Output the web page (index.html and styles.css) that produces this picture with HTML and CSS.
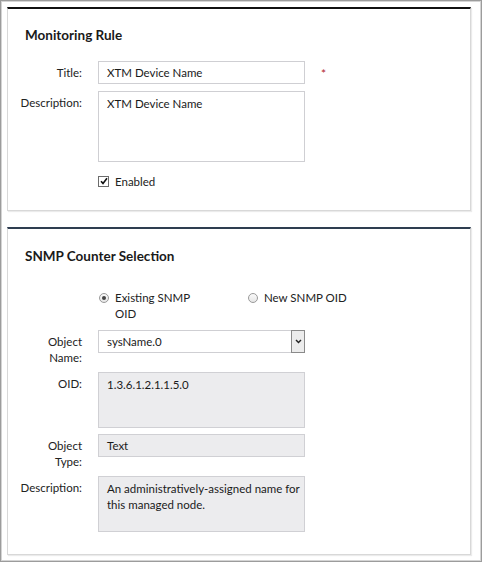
FILE: index.html
```html
<!DOCTYPE html>
<html>
<head>
<meta charset="utf-8">
<link rel="stylesheet" href="styles.css">
</head>
<body>
<div class="frame">
  <section class="panel panel-black">
    <h2 class="panel-title">Monitoring Rule</h2>
    <div class="rows rows-loose">
      <div class="row">
        <span class="lbl">Title:</span>
        <div class="field single">XTM Device Name</div>
        <span class="req">*</span>
      </div>
      <div class="row">
        <span class="lbl">Description:</span>
        <div class="field area tall">XTM Device Name</div>
      </div>
    </div>
    <div class="check-row">
      <span class="checkbox">
        <svg width="8" height="8" viewBox="0 0 8 8"><path d="M1 4.2 L3 6.4 L7 1.2" fill="none" stroke="#111" stroke-width="1.6"/></svg>
      </span>
      <span class="check-label">Enabled</span>
    </div>
  </section>

  <section class="panel panel-navy">
    <h2 class="panel-title">SNMP Counter Selection</h2>
    <div class="radio-group">
      <div class="radio-opt first">
        <span class="radio checked"><span class="dot"></span></span>
        <span class="radio-label">Existing SNMP OID</span>
      </div>
      <div class="radio-opt">
        <span class="radio"></span>
        <span class="radio-label">New SNMP OID</span>
      </div>
    </div>
    <div class="rows rows-tight">
      <div class="row">
        <span class="lbl">Object Name:</span>
        <div class="field single select">
          <span class="select-text">sysName.0</span>
          <span class="select-btn">
            <svg width="7" height="5" viewBox="0 0 7 5"><path d="M1 1 L3.5 3.6 L6 1" fill="none" stroke="#222" stroke-width="1.4"/></svg>
          </span>
        </div>
      </div>
      <div class="row">
        <span class="lbl">OID:</span>
        <div class="field area ro">1.3.6.1.2.1.1.5.0</div>
      </div>
      <div class="row">
        <span class="lbl">Object Type:</span>
        <div class="field single ro">Text</div>
      </div>
      <div class="row">
        <span class="lbl">Description:</span>
        <div class="field area ro">An administratively-assigned name for this managed node.</div>
      </div>
    </div>
  </section>
</div>
</body>
</html>
```

FILE: styles.css
```css
* { box-sizing: border-box; }

html, body {
  margin: 0;
  padding: 0;
  background: #fff;
}

body {
  font-family: Lato, "Liberation Sans", Arial, sans-serif;
  font-size: 11.5px;
  color: #222;
}

.frame {
  width: 482px;
  height: 562px;
  border: 1px solid #9c9c9c;
  box-shadow: inset 1px 1px 0 #d4d4d4, inset -1px -1px 0 #d4d4d4;
  padding: 6px 10px 6px 6px;
}

.panel {
  display: flex;
  flex-direction: column;
  border: 1px solid #d8d8d8;
  box-shadow: 1px 1px 1px rgba(0, 0, 0, 0.08);
  padding: 16px 16px 21px 17px;
  background: #fff;
}

.panel-black { border-top: 2px solid #111; }

.panel-navy {
  border-top: 2px solid #2e3d50;
  margin-top: 16px;
  padding-top: 17px;
  padding-bottom: 22px;
}

.panel-title {
  margin: 0 0 16px 0;
  font-size: 13.5px;
  line-height: 20px;
  font-weight: 700;
  color: #1a1a1a;
}

.rows {
  display: flex;
  flex-direction: column;
}

.rows-loose { gap: 7px; }
.rows-tight { gap: 6px; }

.row {
  display: grid;
  grid-template-columns: 57px 207px auto;
  column-gap: 16px;
  align-items: start;
}

.lbl {
  display: flex;
  justify-content: flex-end;
  text-align: right;
  padding-top: 4px;
  line-height: 16px;
  color: #222;
}

.field {
  border: 1px solid #cfcfd3;
  background: #fff;
  padding: 3px 8px;
  line-height: 16px;
  color: #1a1a1a;
}

.field.single { height: 23px; }

.field.area {
  height: 56px;
  padding-top: 4px;
  padding-right: 2px;
}

.field.area.tall { height: 71px; }

.field.ro {
  background: #ececee;
  border-color: #d0d0d4;
}

.req {
  color: #b01c2e;
  font-size: 12px;
  line-height: 16px;
  padding-top: 5px;
}

.select {
  position: relative;
  display: flex;
  align-items: center;
  padding-right: 0;
}

.select-text { flex: 1; }

.select-btn {
  position: absolute;
  right: -1px;
  top: -1px;
  width: 14px;
  height: 23px;
  border: 1px solid #8a8a8a;
  background: #ececec;
  display: flex;
  align-items: center;
  justify-content: center;
}

.check-row {
  display: flex;
  align-items: center;
  margin-top: 11px;
  margin-left: 73px;
  height: 16px;
}

.checkbox {
  width: 11px;
  height: 11px;
  border: 1px solid #6c6c6c;
  background: #fff;
  display: flex;
  align-items: center;
  justify-content: center;
}

.check-label { margin-left: 6px; }

.radio-group {
  display: flex;
  margin-left: 73px;
  margin-top: 8px;
  margin-bottom: 8px;
}

.radio-opt {
  display: flex;
  align-items: flex-start;
  line-height: 16px;
}

.radio-opt.first { width: 149px; }

.radio-opt.first .radio-label { width: 80px; }

.radio {
  width: 10px;
  height: 10px;
  border-radius: 50%;
  border: 1px solid #9a9a9a;
  background: linear-gradient(#fafafa, #e6e6e6);
  margin-top: 3px;
  margin-left: 1px;
  display: flex;
  align-items: center;
  justify-content: center;
}

.radio .dot {
  width: 4px;
  height: 4px;
  border-radius: 50%;
  background: #444;
}

.radio-label { margin-left: 6px; }
```
